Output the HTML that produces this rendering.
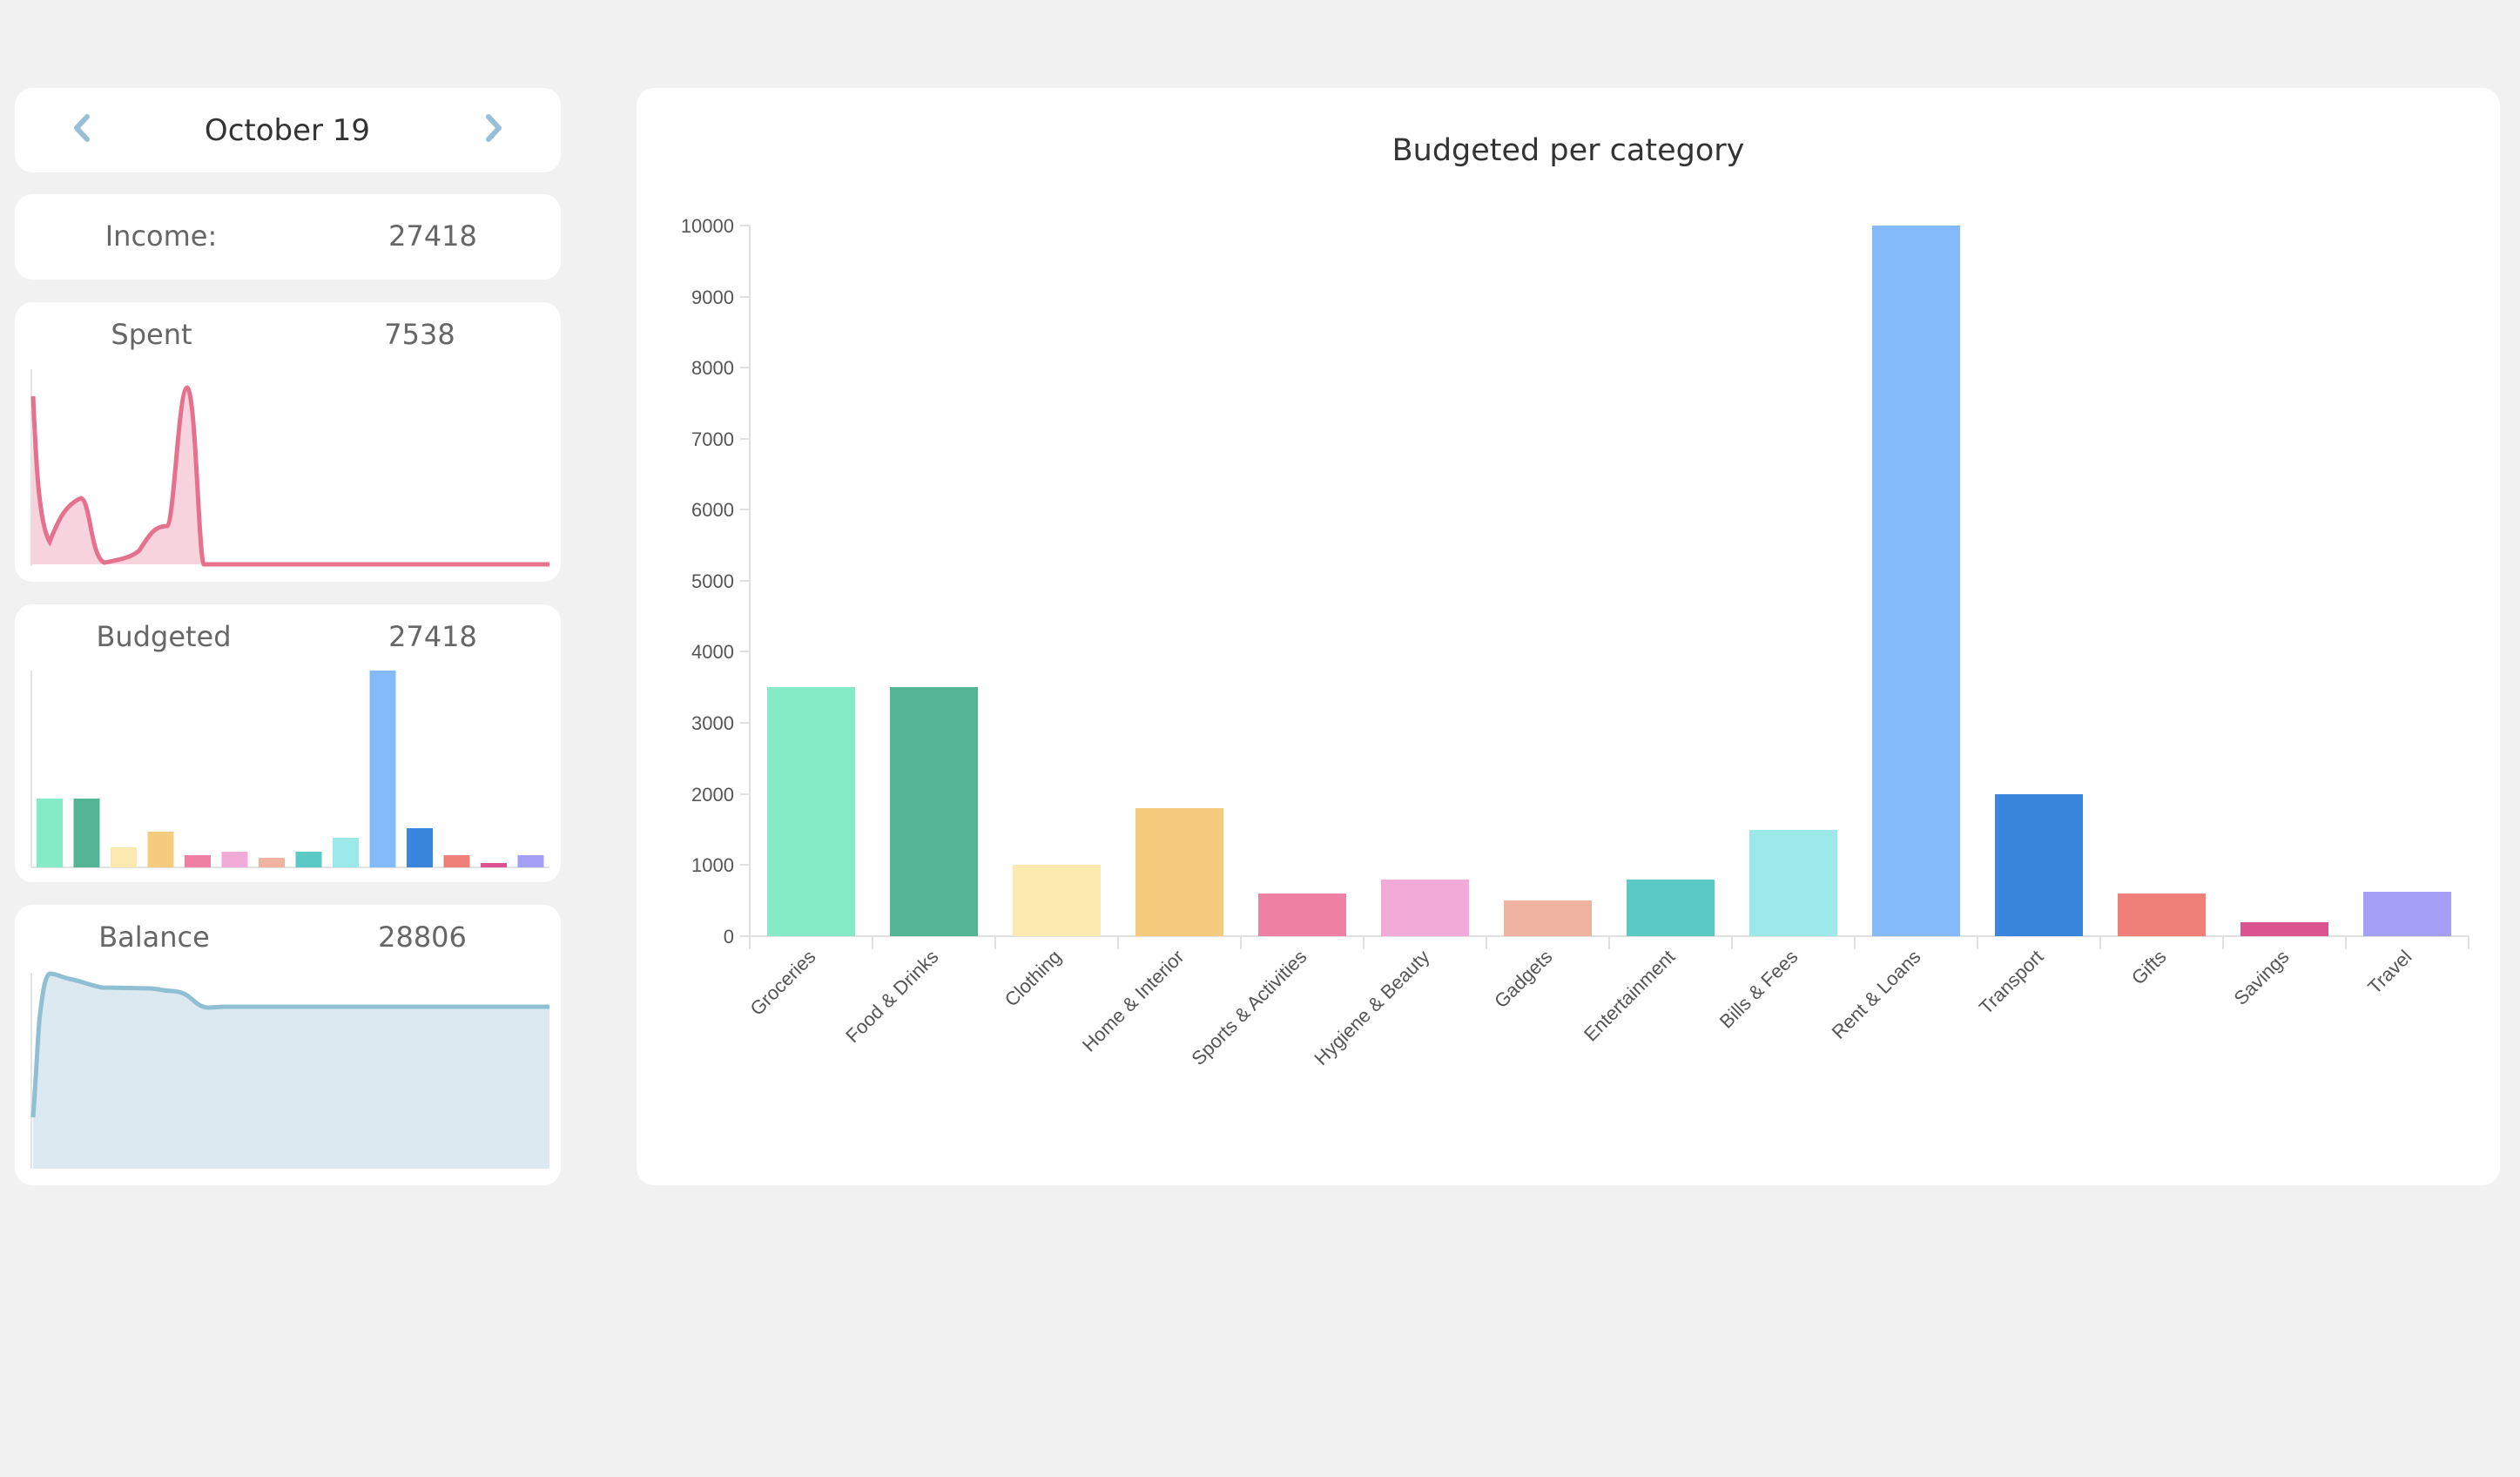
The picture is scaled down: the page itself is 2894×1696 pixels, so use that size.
<!DOCTYPE html>
<html><head><meta charset="utf-8"><style>
body{margin:0;width:2894px;height:1696px;background:#f1f1f1;position:relative;overflow:hidden;font-family:"DejaVu Sans","Liberation Sans",sans-serif}
.c{position:absolute;background:#fff;border-radius:20px}
.t{position:absolute;font-size:32px;color:#666;transform:translate(-50%,-50%);white-space:nowrap}
svg{position:absolute;left:0;top:0}
</style></head><body>
<div class="c" style="left:17px;top:101px;width:627px;height:97px"></div>
<div class="c" style="left:17px;top:223px;width:627px;height:98px"></div>
<div class="c" style="left:17px;top:347px;width:627px;height:321px"></div>
<div class="c" style="left:17px;top:694px;width:627px;height:319px"></div>
<div class="c" style="left:17px;top:1039px;width:627px;height:322px"></div>
<div class="c" style="left:731px;top:101px;width:2140px;height:1260px"></div>
<div class="t" style="left:330px;top:150px;font-size:34px;color:#333">October 19</div>
<div class="t" style="left:185px;top:271px">Income:</div><div class="t" style="left:497px;top:271px">27418</div>
<div class="t" style="left:174px;top:384px">Spent</div><div class="t" style="left:482px;top:384px">7538</div>
<div class="t" style="left:188px;top:731px">Budgeted</div><div class="t" style="left:497px;top:731px">27418</div>
<div class="t" style="left:177px;top:1076px">Balance</div><div class="t" style="left:485px;top:1076px">28806</div>
<div class="t" style="left:1801px;top:173px;font-size:35px;color:#333">Budgeted per category</div>
<svg width="2894" height="1696" xmlns="http://www.w3.org/2000/svg">
<g fill="none" stroke="#97c0d6" stroke-width="6" stroke-linecap="round" stroke-linejoin="round">
<path d="M100 134 L88 147 L100 160"/><path d="M561 134 L573 147 L561 160"/></g>
<line x1="36" y1="424" x2="36" y2="650" stroke="#e3e3e3" stroke-width="2"/>
<path d="M38 455 C41 520 44 600 57 622 C66 600 74 580 93 572 C104 575 104 640 120 646 C135 643 150 641 160 632 C173 612 178 604 192 604 C200 600 205 445 215 445 C225 450 228 640 234 648 L631 648 L36 648 Z" fill="#f7d3dd"/>
<path d="M38 455 C41 520 44 600 57 622 C66 600 74 580 93 572 C104 575 104 640 120 646 C135 643 150 641 160 632 C173 612 178 604 192 604 C200 600 205 445 215 445 C225 450 228 640 234 648 L631 648" fill="none" stroke="#e5718f" stroke-width="5"/>
<line x1="36" y1="770" x2="36" y2="996" stroke="#e3e3e3" stroke-width="2"/>
<line x1="36" y1="996" x2="631" y2="996" stroke="#e3e3e3" stroke-width="2"/>
<rect x="42" y="917" width="30" height="79" fill="#84ebc6"/>
<rect x="84.5" y="917" width="30" height="79" fill="#53b595"/>
<rect x="127" y="973" width="30" height="23" fill="#fce9b0"/>
<rect x="169.5" y="955" width="30" height="41" fill="#f5cb7e"/>
<rect x="212" y="982" width="30" height="14" fill="#ee80a4"/>
<rect x="254.5" y="978" width="30" height="18" fill="#f2abd9"/>
<rect x="297" y="985" width="30" height="11" fill="#f0b3a2"/>
<rect x="339.5" y="978" width="30" height="18" fill="#5bc9c6"/>
<rect x="382" y="962" width="30" height="34" fill="#9ce9ea"/>
<rect x="424.5" y="770" width="30" height="226" fill="#84baf8"/>
<rect x="467" y="951" width="30" height="45" fill="#3985dd"/>
<rect x="509.5" y="982" width="30" height="14" fill="#ef7e79"/>
<rect x="552" y="991" width="30" height="5" fill="#dc5391"/>
<rect x="594.5" y="982" width="30" height="14" fill="#a49ef5"/>
<line x1="36" y1="1117" x2="36" y2="1342" stroke="#e3e3e3" stroke-width="2"/>
<path d="M38 1283 C42 1230 44 1175 46 1165 C50 1130 53 1120 57 1118 C65 1118 70 1122 80 1124 C95 1127 105 1132 118 1134 L173 1135 C185 1136 190 1138 198 1138 C210 1139 214 1142 220 1147 C228 1154 232 1157 240 1157 L257 1156 L631 1156 L631 1342 L38 1342 Z" fill="#dde9f0"/>
<path d="M38 1283 C42 1230 44 1175 46 1165 C50 1130 53 1120 57 1118 C65 1118 70 1122 80 1124 C95 1127 105 1132 118 1134 L173 1135 C185 1136 190 1138 198 1138 C210 1139 214 1142 220 1147 C228 1154 232 1157 240 1157 L257 1156 L631 1156" fill="none" stroke="#8fbfd3" stroke-width="5"/>
<g stroke="#e0e0e0" stroke-width="2">
<line x1="861" y1="259" x2="861" y2="1090"/>
<line x1="850" y1="1075" x2="2835" y2="1075"/>
<line x1="850" y1="259" x2="861" y2="259"/><line x1="850" y1="341" x2="861" y2="341"/><line x1="850" y1="422" x2="861" y2="422"/><line x1="850" y1="504" x2="861" y2="504"/><line x1="850" y1="585" x2="861" y2="585"/><line x1="850" y1="667" x2="861" y2="667"/><line x1="850" y1="748" x2="861" y2="748"/><line x1="850" y1="830" x2="861" y2="830"/><line x1="850" y1="912" x2="861" y2="912"/><line x1="850" y1="993" x2="861" y2="993"/>
<line x1="1002" y1="1075" x2="1002" y2="1090"/><line x1="1143" y1="1075" x2="1143" y2="1090"/><line x1="1284" y1="1075" x2="1284" y2="1090"/><line x1="1425" y1="1075" x2="1425" y2="1090"/><line x1="1566" y1="1075" x2="1566" y2="1090"/><line x1="1707" y1="1075" x2="1707" y2="1090"/><line x1="1848" y1="1075" x2="1848" y2="1090"/><line x1="1989" y1="1075" x2="1989" y2="1090"/><line x1="2130" y1="1075" x2="2130" y2="1090"/><line x1="2271" y1="1075" x2="2271" y2="1090"/><line x1="2412" y1="1075" x2="2412" y2="1090"/><line x1="2553" y1="1075" x2="2553" y2="1090"/><line x1="2694" y1="1075" x2="2694" y2="1090"/><line x1="2835" y1="1075" x2="2835" y2="1090"/>
</g>
<g font-family="Liberation Sans, sans-serif" font-size="22" fill="#555" text-anchor="end">
<text x="843" y="1083">0</text><text x="843" y="1001">1000</text><text x="843" y="920">2000</text><text x="843" y="838">3000</text><text x="843" y="756">4000</text><text x="843" y="675">5000</text><text x="843" y="593">6000</text><text x="843" y="512">7000</text><text x="843" y="430">8000</text><text x="843" y="349">9000</text><text x="843" y="267">10000</text>
</g>
<rect x="881" y="789" width="101" height="286" fill="#84ebc6"/>
<rect x="1022" y="789" width="101" height="286" fill="#53b595"/>
<rect x="1163" y="993" width="101" height="82" fill="#fce9b0"/>
<rect x="1304" y="928" width="101" height="147" fill="#f5cb7e"/>
<rect x="1445" y="1026" width="101" height="49" fill="#ee80a4"/>
<rect x="1586" y="1010" width="101" height="65" fill="#f2abd9"/>
<rect x="1727" y="1034" width="101" height="41" fill="#f0b3a2"/>
<rect x="1868" y="1010" width="101" height="65" fill="#5bc9c6"/>
<rect x="2009" y="953" width="101" height="122" fill="#9ce9ea"/>
<rect x="2150" y="259" width="101" height="816" fill="#84baf8"/>
<rect x="2291" y="912" width="101" height="163" fill="#3985dd"/>
<rect x="2432" y="1026" width="101" height="49" fill="#ef7e79"/>
<rect x="2573" y="1059" width="101" height="16" fill="#dc5391"/>
<rect x="2714" y="1024" width="101" height="51" fill="#a49ef5"/>
<g font-family="Liberation Sans, sans-serif" font-size="22" fill="#555" text-anchor="end">
<text transform="translate(938,1100) rotate(-45)">Groceries</text>
<text transform="translate(1079,1100) rotate(-45)">Food &amp; Drinks</text>
<text transform="translate(1220,1100) rotate(-45)">Clothing</text>
<text transform="translate(1361,1100) rotate(-45)">Home &amp; Interior</text>
<text transform="translate(1502,1100) rotate(-45)">Sports &amp; Activities</text>
<text transform="translate(1643,1100) rotate(-45)">Hygiene &amp; Beauty</text>
<text transform="translate(1784,1100) rotate(-45)">Gadgets</text>
<text transform="translate(1925,1100) rotate(-45)">Entertainment</text>
<text transform="translate(2066,1100) rotate(-45)">Bills &amp; Fees</text>
<text transform="translate(2207,1100) rotate(-45)">Rent &amp; Loans</text>
<text transform="translate(2348,1100) rotate(-45)">Transport</text>
<text transform="translate(2489,1100) rotate(-45)">Gifts</text>
<text transform="translate(2630,1100) rotate(-45)">Savings</text>
<text transform="translate(2771,1100) rotate(-45)">Travel</text>
</g>
</svg>
</body></html>
